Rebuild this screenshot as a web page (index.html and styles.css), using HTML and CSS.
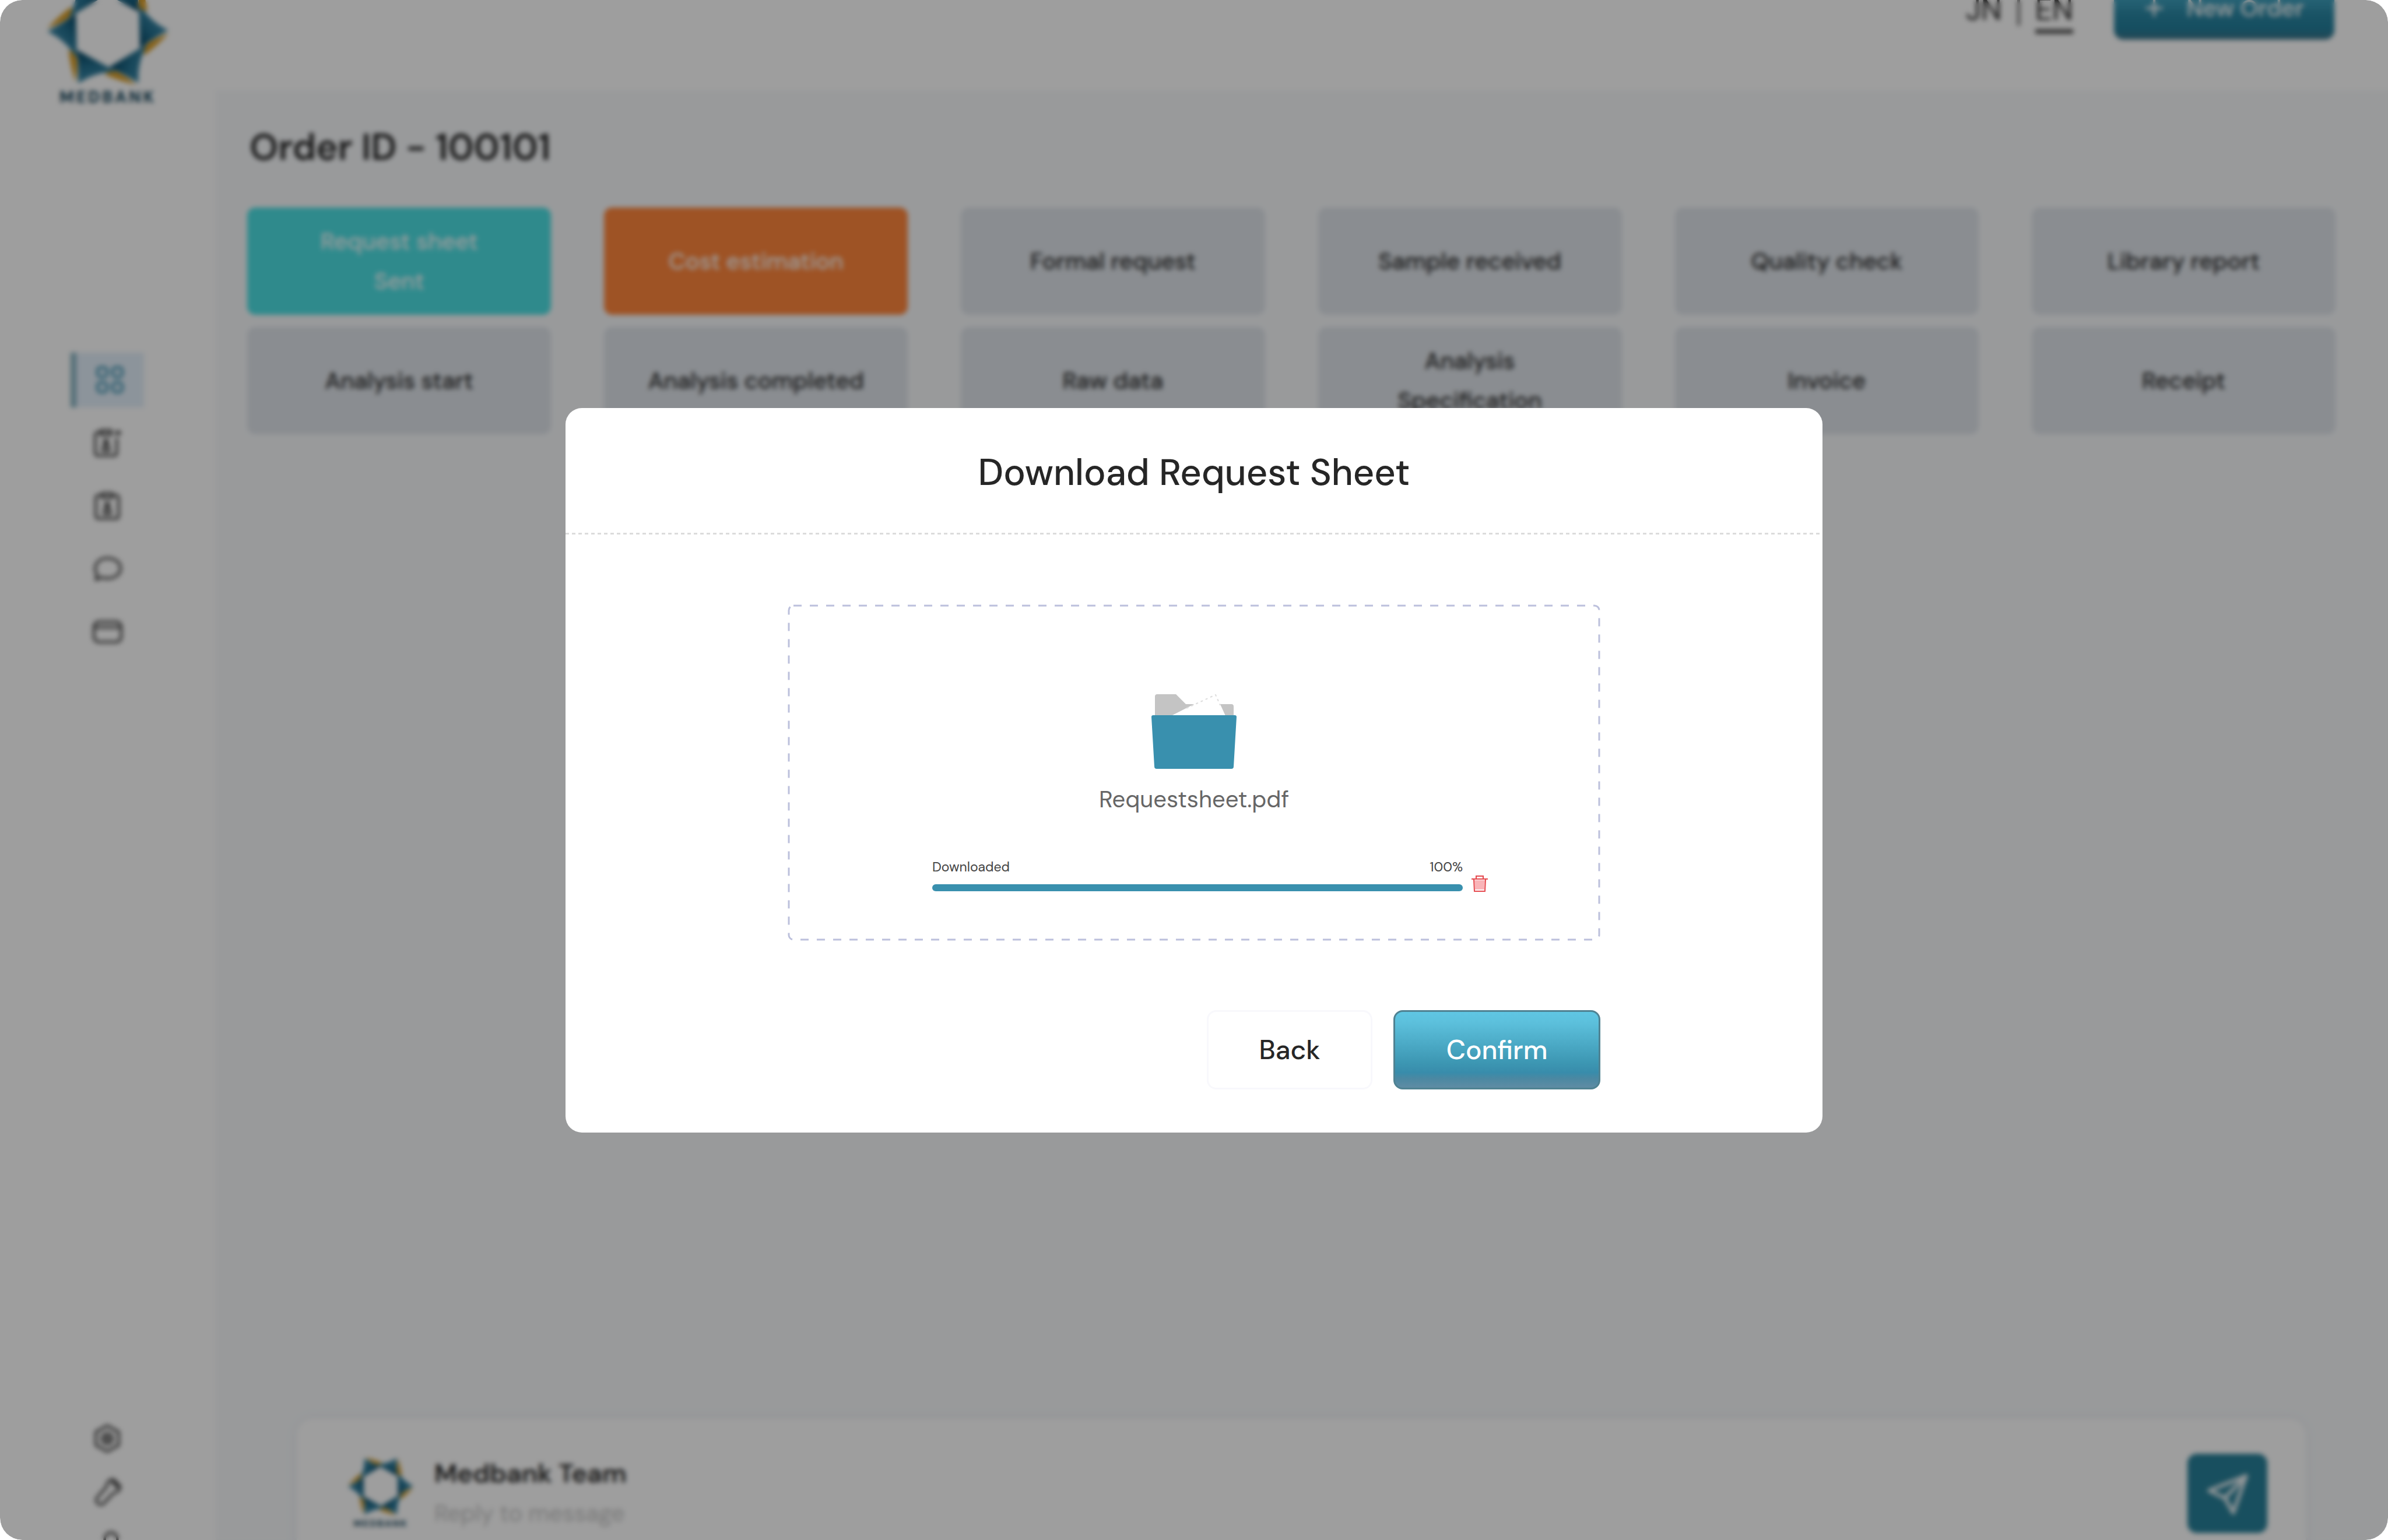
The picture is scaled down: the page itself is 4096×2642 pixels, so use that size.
FILE: index.html
```html
<!DOCTYPE html>
<html lang="en">
<head>
<meta charset="utf-8">
<title>Medbank – Order 100101</title>
<link rel="stylesheet" href="styles.css">
</head>
<body>
<svg class="defs" aria-hidden="true">
  <defs>
    <linearGradient id="arm" x1="0" y1="1" x2="0.8" y2="0">
      <stop offset="0" stop-color="#00405f"/>
      <stop offset="0.4" stop-color="#24708f"/>
      <stop offset="1" stop-color="#4c9cbd"/>
    </linearGradient>
    <g id="arm-shape">
      <path fill="#d99c22" d="M325 14Q250 40 190 85L195 132Q270 75 325 14z"/>
      <path fill="url(#arm)" d="M166-150Q225-50 325-4Q245 42 172 92z"/>
    </g>
    <symbol id="star" viewBox="-326 -326 652 652">
      <use href="#arm-shape"/>
      <use href="#arm-shape" transform="rotate(60)"/>
      <use href="#arm-shape" transform="rotate(120)"/>
      <use href="#arm-shape" transform="rotate(180)"/>
      <use href="#arm-shape" transform="rotate(240)"/>
      <use href="#arm-shape" transform="rotate(300)"/>
    </symbol>
  </defs>
</svg>
<div class="screen">
  <div class="app">
    <aside class="sidebar">
      <div class="brand">
        <svg class="brand-star"><use href="#star"/></svg>
        <span class="brand-name">MEDBANK</span>
      </div>
      <nav class="nav" aria-label="Main">
        <a class="nav-link active" href="#" aria-label="Dashboard">
          <svg class="icon" viewBox="0 0 24 24"><rect x="2" y="2" width="7.5" height="7.5" rx="2.4"/><rect x="14" y="2" width="7.5" height="7.5" rx="2.4"/><rect x="2" y="14" width="7.5" height="7.5" rx="2.4"/><rect x="14" y="14" width="7.5" height="7.5" rx="2.4"/></svg>
        </a>
        <a class="nav-link" href="#" aria-label="New orders">
          <svg class="icon" viewBox="0 0 24 24"><path d="M6 3.500H4.500a2 2 0 0 0-2 2V20a2 2 0 0 0 2 2h13a2 2 0 0 0 2-2V8"/><path d="M7 2h8v3.500H7zM18 4h5M20.500 2v4"/><circle cx="11" cy="11" r="1.400"/><path d="M8.500 18c0-6 5-6 5 0z"/></svg>
        </a>
        <a class="nav-link" href="#" aria-label="Orders">
          <svg class="icon" viewBox="0 0 24 24"><path d="M7 3.500H5a2 2 0 0 0-2 2V20a2 2 0 0 0 2 2h14a2 2 0 0 0 2-2V5.500a2 2 0 0 0-2-2h-2"/><path d="M8 2h8v3.500H8z"/><circle cx="12" cy="11" r="1.400"/><path d="M9.500 18c0-6 5-6 5 0z"/></svg>
        </a>
        <a class="nav-link" href="#" aria-label="Messages">
          <svg class="icon" viewBox="0 0 24 24"><path d="M3 20.500l1-4.200C0 11 4 3.500 12 3.500c6.500 0 10.500 3.600 10.500 8s-4 8-10.500 8c-1.600 0-3-.3-4.200-.8z"/></svg>
        </a>
        <a class="nav-link" href="#" aria-label="Payments">
          <svg class="icon" viewBox="0 0 24 24"><rect x="1.500" y="4" width="21.500" height="16" rx="4"/><path d="M2 8.500h20"/></svg>
        </a>
      </nav>
      <nav class="nav nav-bottom" aria-label="Account">
        <a class="nav-link" href="#" aria-label="Settings">
          <svg class="icon" viewBox="0 0 24 24"><path d="M12 1.800l9 5v10.400l-9 5-9-5V6.800z"/><circle cx="12" cy="12" r="4"/><circle cx="12" cy="12" r="1"/></svg>
        </a>
        <a class="nav-link" href="#" aria-label="Tools">
          <svg class="icon" viewBox="0 0 24 24"><path d="M13 3.500c2-2 4-1.500 4-1.500l5 5s.5 3-2 4.500c-1.500.8-2.500.5-3.500 1.500l-7.500 8c-3 2.500-7.500-1.500-5-4.800l7-8c1-1.200.5-3.200 2-4.700zM15.500 3.500L20.500 8.500"/></svg>
        </a>
        <a class="nav-link" href="#" aria-label="Sign out">
          <svg class="icon" viewBox="0 0 24 24"><path d="M10 12V6.500a5 5 0 0 1 10 0V12M7 11h16v11H7z"/></svg>
        </a>
      </nav>
    </aside>
    <div class="page">
      <header class="topbar">
        <div class="langs">
          <a class="lang" href="#">JN</a>
          <span class="lang-sep"></span>
          <a class="lang current" href="#">EN</a>
        </div>
        <button class="btn btn-primary new-order" type="button">
          <svg class="plus" viewBox="0 0 24 24"><path d="M12 2v20M2 12h20"/></svg>
          New Order
        </button>
      </header>
      <main class="main">
        <h1 class="order-title">Order ID - 100101</h1>
        <ol class="steps">
          <li class="step done"><span>Request sheet<br>Sent</span></li>
          <li class="step current-step">Cost estimation</li>
          <li class="step">Formal request</li>
          <li class="step">Sample received</li>
          <li class="step">Quality check</li>
          <li class="step">Library report</li>
          <li class="step">Analysis start</li>
          <li class="step">Analysis completed</li>
          <li class="step">Raw data</li>
          <li class="step"><span>Analysis<br>Specification</span></li>
          <li class="step">Invoice</li>
          <li class="step">Receipt</li>
        </ol>
        <form class="composer">
          <div class="avatar">
            <svg class="avatar-star"><use href="#star"/></svg>
            <span class="avatar-name">MEDBANK</span>
          </div>
          <div class="composer-body">
            <label class="composer-name" for="reply">Medbank Team</label>
            <input class="composer-input" id="reply" type="text" placeholder="Reply to message">
          </div>
          <button class="send" type="button" aria-label="Send">
            <svg class="send-icon" viewBox="0 0 24 24"><path d="M22 2.500L2 10.500l8.500 4L15 22.500zM22 2.500L10.500 14.500"/></svg>
          </button>
        </form>
      </main>
    </div>
  </div>

  <div class="overlay">
    <section class="modal" role="dialog" aria-modal="true" aria-labelledby="modal-title">
      <header class="modal-head">
        <h2 class="modal-title" id="modal-title">Download Request Sheet</h2>
      </header>
      <div class="modal-body">
        <div class="dropzone">
          <svg class="dropzone-frame" aria-hidden="true"><rect x="2" y="2" rx="8"/></svg>
          <svg class="folder" viewBox="0 0 146 128" aria-hidden="true">
            <path fill="#c4c4c4" d="M6 40V4a4 4 0 0 1 4-4h32l17 17h78a4 4 0 0 1 4 4v19z"/>
            <path fill="#fff" d="M34 37l71-36q5-2 7 3l15 33z"/>
            <path class="sheet-edge" d="M60 24L110 1l8 18"/>
            <path fill="#3990ae" d="M3 36h140a3 3 0 0 1 3 3l-5 85a4 4 0 0 1-4 4H9a4 4 0 0 1-4-4L0 39a3 3 0 0 1 3-3z"/>
          </svg>
          <p class="file-name">Requestsheet.pdf</p>
          <div class="transfer">
            <div class="transfer-labels">
              <label for="transfer-bar">Downloaded</label>
              <span>100%</span>
            </div>
            <progress class="transfer-bar" id="transfer-bar" max="100" value="100"></progress>
            <button class="remove" type="button" aria-label="Remove file">
              <svg class="trash" viewBox="0 0 28 30"><path fill="#f9b4b8" stroke="none" d="M5 9h18l-1 16H6z"/><path d="M0 7h28M8 6V2h12v4M4 8l1 20h18l1-20"/></svg>
            </button>
          </div>
        </div>
        <div class="actions">
          <button class="btn btn-plain" type="button">Back</button>
          <button class="btn btn-primary confirm" type="button">Confirm</button>
        </div>
      </div>
    </section>
  </div>
</div>
</body>
</html>
```
FILE: styles.css
```css
* {
  box-sizing: border-box;
}

body {
  margin: 0;
  background: #fff;
  color: #262626;
  font-family: "DM Sans", Inter, sans-serif;
  font-size: 40px;
}

h1, h2, p, ol {
  margin: 0;
  padding: 0;
}

a {
  color: inherit;
  text-decoration: none;
}

button, input {
  font: inherit;
  color: inherit;
}

.defs {
  position: absolute;
  width: 0;
  height: 0;
}

.screen {
  position: relative;
  height: 100vh;
  overflow: hidden;
  border-radius: 38px;
}

/* The app behind the dialog is scrolled past its top edge. */
.app {
  display: flex;
  height: calc(100vh + 183px);
  margin-top: -127px;
}

/* Sidebar */
.sidebar {
  display: flex;
  flex-direction: column;
  width: 370px;
  flex: none;
  background: #fff;
}

.brand {
  display: flex;
  flex-direction: column;
  align-items: center;
  height: 732px;
  padding-top: 76px;
}

.brand-star {
  width: 212px;
  height: 208px;
}

.brand-name {
  color: #14465c;
  font-size: 28px;
  font-weight: 800;
  line-height: 20px;
  letter-spacing: 4px;
}

.nav {
  display: flex;
  flex-direction: column;
  gap: 14px;
  padding: 0 123px 0 121px;
  color: #484848;
}

.nav-bottom {
  gap: 0;
  margin-top: auto;
}

.nav-link {
  display: flex;
  align-items: center;
  justify-content: center;
  height: 94px;
}

.nav-bottom .nav-link {
  height: 92px;
}

.nav-link.active {
  border-left: 10px solid #89b4c2;
  background: #e3effa;
  color: #3990ae;
}

.icon {
  width: 52px;
  height: 52px;
  fill: none;
  stroke: currentColor;
  stroke-width: 2;
  stroke-linejoin: round;
}

/* Page */
.page {
  display: flex;
  flex-direction: column;
  flex: 1;
  min-width: 0;
  background: #f7f9fb;
}

.topbar {
  display: flex;
  align-items: center;
  justify-content: flex-end;
  gap: 70px;
  height: 282px;
  padding-right: 92px;
  background: #fff;
}

.langs {
  display: flex;
  align-items: center;
  gap: 26px;
  font-size: 52px;
  line-height: 60px;
}

.lang {
  padding: 16px 0 4px;
  border-bottom: 8px solid transparent;
}

.lang.current {
  border-color: #555;
}

.lang-sep {
  width: 5px;
  height: 60px;
  background: #777;
}

.btn {
  display: flex;
  align-items: center;
  justify-content: center;
  border-radius: 16px;
  font-weight: 500;
}

.btn-primary {
  border: 3px solid #4f8292;
  background: linear-gradient(#5fc6e3, #5cc0dc 14%, #3c96b2 68%, #388cab 80%, #4b88a2 88%, #5f8ca4);
  color: #fff;
}

.new-order {
  gap: 38px;
  width: 378px;
  height: 108px;
  border: 0;
  background: linear-gradient(#5fc6e3, #2a87a4 60%, #237e9b 84%, #3f7488);
  font-size: 40px;
}

.plus {
  width: 34px;
  height: 34px;
  stroke: #fff;
  stroke-width: 3;
}

.main {
  display: flex;
  flex-direction: column;
  flex: 1;
  padding: 60px 90px 0 54px;
}

.order-title {
  padding: 0 4px;
  font-size: 63px;
  font-weight: 600;
  line-height: 76px;
}

.steps {
  display: grid;
  grid-template-columns: repeat(6, 1fr);
  grid-auto-rows: 184px;
  gap: 21px 91px;
  margin-top: 65px;
  list-style: none;
}

.step {
  display: flex;
  align-items: center;
  justify-content: center;
  border-radius: 14px;
  background: #dfe4ea;
  font-weight: 500;
  line-height: 68px;
  text-align: center;
}

.step.done {
  background: #4cdfe3;
  color: #fff;
}

.step.current-step {
  background: #ff863c;
  color: #fff;
}

.composer {
  display: flex;
  align-items: flex-start;
  height: 264px;
  margin: auto 51px 0 85px;
  padding: 60px 66px 0 86px;
  border-radius: 28px;
  background: #fff;
  box-shadow: 0 0 20px #e9ecf2;
}

.avatar {
  display: flex;
  flex-direction: column;
  align-items: center;
  width: 116px;
  color: #14465c;
}

.avatar-star {
  width: 116px;
  height: 112px;
}

.avatar-name {
  font-size: 16px;
  font-weight: 800;
  line-height: 16px;
  letter-spacing: 2px;
}

.composer-body {
  display: flex;
  flex-direction: column;
  flex: 1;
  margin-left: 34px;
}

.composer-name {
  font-size: 45px;
  font-weight: 600;
  line-height: 68px;
}

.composer-input {
  height: 68px;
  padding: 0;
  border: 0;
  background: none;
}

.composer-input::placeholder {
  color: #c4c4c4;
}

.send {
  display: flex;
  align-items: center;
  justify-content: center;
  width: 137px;
  height: 136px;
  padding: 0;
  border: 0;
  border-radius: 16px;
  background: #288099;
}

.send-icon {
  width: 76px;
  height: 76px;
  fill: none;
  stroke: #e8f1f4;
  stroke-width: 2;
  stroke-linejoin: round;
}

/* Dialog */
.overlay {
  position: absolute;
  inset: 0;
  display: flex;
  align-items: center;
  justify-content: center;
  background: rgba(0, 0, 0, 0.38);
  backdrop-filter: blur(4px);
}

.modal {
  width: 2156px;
  max-width: 90%;
  border-radius: 28px;
  background: #fff;
}

.modal-head {
  padding: 71px 40px 66px;
  background: repeating-linear-gradient(90deg, #dcdcdc 0 6px, transparent 6px 11px) bottom / 100% 3px no-repeat;
  text-align: center;
}

.modal-title {
  font-size: 63px;
  font-weight: 500;
  line-height: 80px;
}

.modal-body {
  padding: 120px 381px 74px;
}

.dropzone {
  position: relative;
  display: flex;
  flex-direction: column;
  align-items: center;
  padding: 154px 236px 85px;
}

.dropzone-frame {
  position: absolute;
  inset: 0;
  width: 100%;
  height: 100%;
}

.dropzone-frame rect {
  width: calc(100% - 4px);
  height: calc(100% - 4px);
  fill: none;
  stroke: #bcc0dc;
  stroke-width: 3;
  stroke-dasharray: 14 14;
}

.folder {
  width: 146px;
  height: 128px;
}

.sheet-edge {
  fill: none;
  stroke: #ddd;
  stroke-width: 2;
  stroke-dasharray: 4 5;
}

.file-name {
  margin-top: 26px;
  color: #666;
  font-size: 40px;
  line-height: 52px;
}

.transfer {
  position: relative;
  align-self: stretch;
  max-width: 910px;
  margin: 74px 0 0 12px;
}

.transfer-labels {
  display: flex;
  justify-content: space-between;
  color: #444;
  font-size: 23px;
  line-height: 32px;
}

.transfer-bar {
  display: block;
  width: 100%;
  height: 12px;
  margin-top: 14px;
  border: 0;
  border-radius: 6px;
  overflow: hidden;
  appearance: none;
  background: #e5eef2;
}

.transfer-bar::-webkit-progress-bar {
  background: #e5eef2;
}

.transfer-bar::-webkit-progress-value {
  background: #3990ae;
}

.remove {
  position: absolute;
  right: -43px;
  bottom: -2px;
  padding: 0;
  border: 0;
  background: none;
}

.trash {
  display: block;
  width: 28px;
  height: 30px;
  fill: none;
  stroke: #e5484d;
  stroke-width: 2;
}

.actions {
  display: flex;
  justify-content: flex-end;
  gap: 36px;
  margin-top: 119px;
  font-size: 46px;
}

.btn-plain {
  width: 284px;
  height: 136px;
  border: 3px solid #f8f8fc;
  background: #fff;
}

.confirm {
  width: 355px;
  height: 136px;
}
```
